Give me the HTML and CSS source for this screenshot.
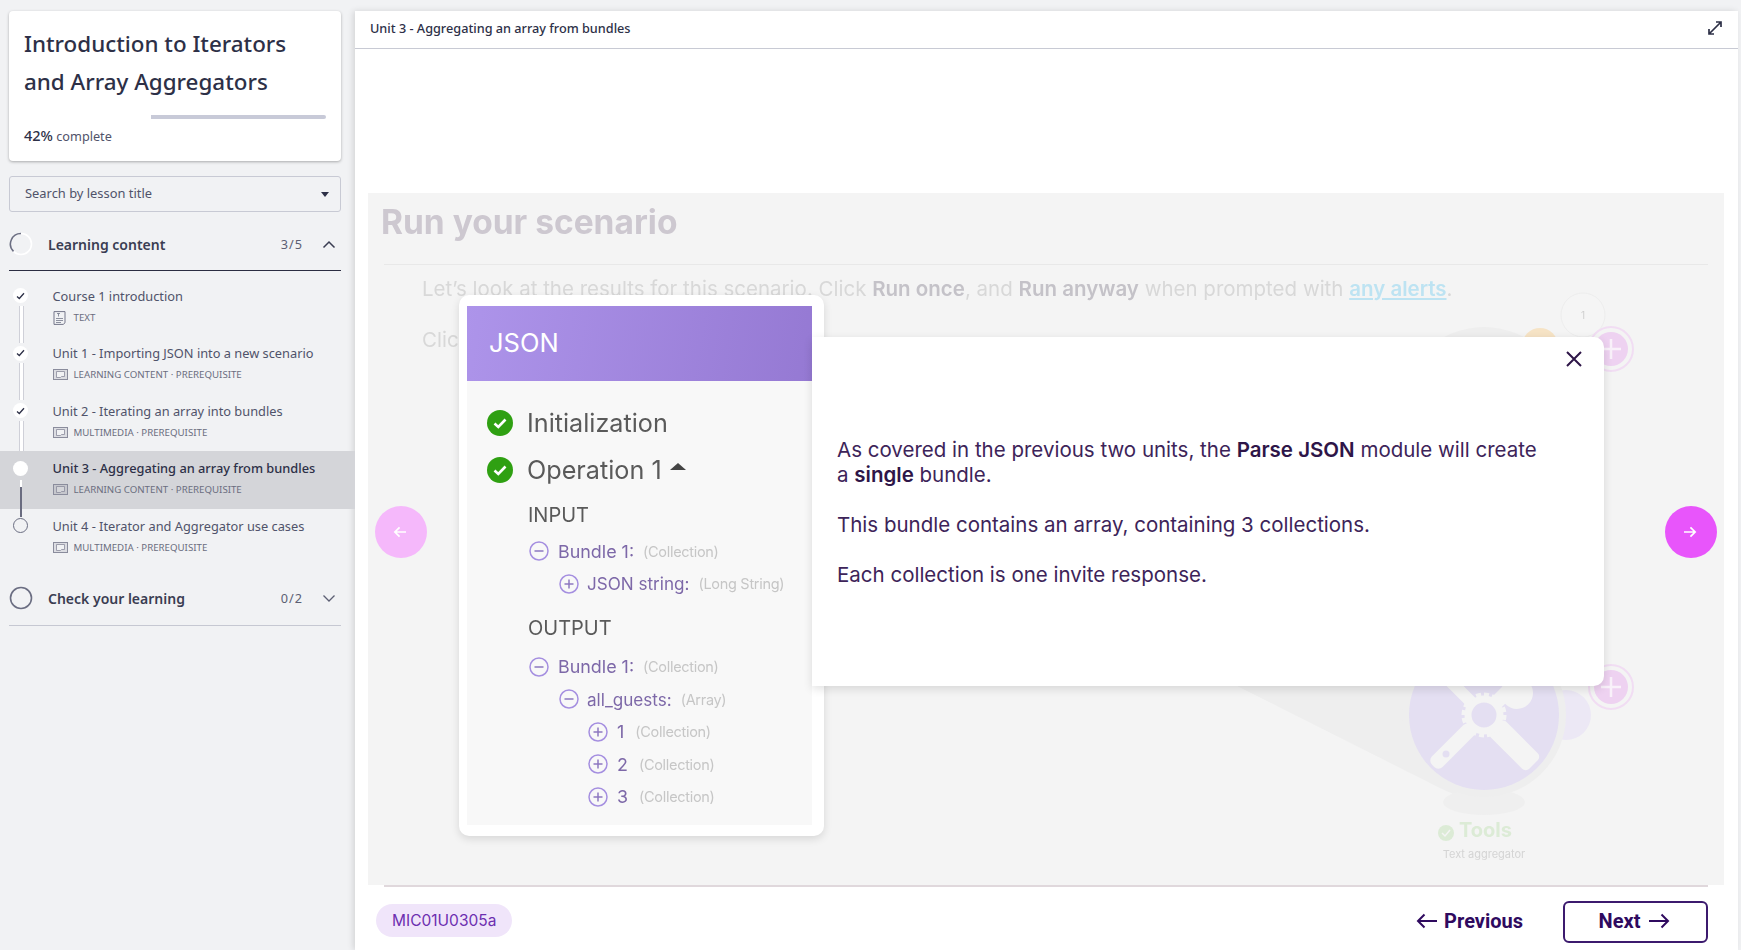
FILE: index.html
```html
<!DOCTYPE html>
<html lang="en">
<head>
    <meta charset="UTF-8">
    <title>Introduction to Iterators and Array Aggregators</title>
    <link rel="stylesheet" href="styles.css">
</head>
<body>
    <aside class="sidebar">
        <div class="course-card">
            <h1>Introduction to Iterators and Array Aggregators</h1>
            <div class="progress"><div class="progress-done"></div><div class="progress-left"></div></div>
            <div class="progress-label"><strong>42%</strong> complete</div>
        </div>

        <div class="search">
            <span>Search by lesson title</span>
            <i class="caret"></i>
        </div>

        <div class="section-head">
            <svg class="ring" width="24" height="24" viewBox="0 0 24 24"><circle cx="12" cy="12" r="10.5" fill="none" stroke="#fff" stroke-width="1.6"/><path d="M12 1.5A10.5 10.5 0 0 0 4.5 19.4" fill="none" stroke="#6b6e82" stroke-width="1.6"/></svg>
            <span class="section-title">Learning content</span>
            <span class="section-count">3/5</span>
            <svg class="chev" width="14" height="9" viewBox="0 0 14 9"><path d="M1.5 7.500L7 2l5.500 5.500" fill="none" stroke="#3a3d52" stroke-width="1.500"/></svg>
        </div>

        <ul class="lessons">
            <li class="lesson done">
                <span class="mark"><svg width="9" height="8" viewBox="0 0 9 8"><path d="M1 4.500L3.300 6.500L8 1.200" fill="none" stroke="#2d3047" stroke-width="1.300"/></svg></span>
                <div class="lesson-title">Course 1 introduction</div>
                <div class="lesson-meta">
                    <svg class="doc" width="13" height="14" viewBox="0 0 13 14"><path d="M1 .6h11v11.200l-1.800 1.600H1z" fill="none" stroke="#74778a"/><path d="M3 7.500h7M3 9.500h7M3 11.500h5M4 2.500h3M5.500 2.500v3" stroke="#74778a" fill="none" stroke-width=".8"/></svg>
                    <span>Text</span>
                </div>
            </li>
            <li class="lesson done">
                <span class="mark"><svg width="9" height="8" viewBox="0 0 9 8"><path d="M1 4.500L3.300 6.500L8 1.200" fill="none" stroke="#2d3047" stroke-width="1.300"/></svg></span>
                <div class="lesson-title">Unit 1 - Importing JSON into a new scenario</div>
                <div class="lesson-meta">
                    <svg class="slides" width="15" height="11" viewBox="0 0 15 11"><rect x=".5" y=".5" width="14" height="10" fill="#dcdde2" stroke="#8a8c9c"/><path d="M3.500 2.500h8v5h-3l-1 1h-4z" fill="#f1f2f4" stroke="#8a8c9c" stroke-width=".8"/></svg>
                    <span>Learning content · Prerequisite</span>
                </div>
            </li>
            <li class="lesson done">
                <span class="mark"><svg width="9" height="8" viewBox="0 0 9 8"><path d="M1 4.500L3.300 6.500L8 1.200" fill="none" stroke="#2d3047" stroke-width="1.300"/></svg></span>
                <div class="lesson-title">Unit 2 - Iterating an array into bundles</div>
                <div class="lesson-meta">
                    <svg class="slides" width="15" height="11" viewBox="0 0 15 11"><rect x=".5" y=".5" width="14" height="10" fill="#dcdde2" stroke="#8a8c9c"/><path d="M3.500 2.500h8v5h-3l-1 1h-4z" fill="#f1f2f4" stroke="#8a8c9c" stroke-width=".8"/></svg>
                    <span>Multimedia · Prerequisite</span>
                </div>
            </li>
            <li class="lesson current">
                <span class="mark"></span>
                <div class="lesson-title">Unit 3 - Aggregating an array from bundles</div>
                <div class="lesson-meta">
                    <svg class="slides" width="15" height="11" viewBox="0 0 15 11"><rect x=".5" y=".5" width="14" height="10" fill="#c6c7cd" stroke="#8a8c9c"/><path d="M3.500 2.500h8v5h-3l-1 1h-4z" fill="#d4d5d9" stroke="#8a8c9c" stroke-width=".8"/></svg>
                    <span>Learning content · Prerequisite</span>
                </div>
            </li>
            <li class="lesson todo">
                <span class="mark"></span>
                <div class="lesson-title">Unit 4 - Iterator and Aggregator use cases</div>
                <div class="lesson-meta">
                    <svg class="slides" width="15" height="11" viewBox="0 0 15 11"><rect x=".5" y=".5" width="14" height="10" fill="#dcdde2" stroke="#8a8c9c"/><path d="M3.500 2.500h8v5h-3l-1 1h-4z" fill="#f1f2f4" stroke="#8a8c9c" stroke-width=".8"/></svg>
                    <span>Multimedia · Prerequisite</span>
                </div>
            </li>
        </ul>

        <div class="section-head second">
            <svg class="ring" width="24" height="24" viewBox="0 0 24 24"><circle cx="12" cy="12" r="10.500" fill="none" stroke="#6b6e82" stroke-width="1.600"/></svg>
            <span class="section-title">Check your learning</span>
            <span class="section-count">0/2</span>
            <svg class="chev" width="14" height="9" viewBox="0 0 14 9"><path d="M1.500 1.500L7 7l5.500-5.500" fill="none" stroke="#5c5f73" stroke-width="1.300"/></svg>
        </div>
    </aside>

    <main class="main">
        <header class="topbar">
            <span>Unit 3 - Aggregating an array from bundles</span>
            <svg width="16" height="16" viewBox="0 0 16 16"><path d="M2 14L14 2M9 2h5v5M2 9v5h5" fill="none" stroke="#2d3047" stroke-width="1.700"/></svg>
        </header>

        <div class="slide-wrap">
            <section class="slide">
                <div class="slide-faded">
                    <h2>Run your scenario</h2>
                    <div class="slide-rule"></div>
                    <p>Let’s look at the results for this scenario. Click <b>Run once</b>, and <b>Run anyway</b> when prompted with <a>any alerts</a>.</p>
                    <p>Click</p>

                    <!-- scenario drawing behind the popups -->
                    <svg class="scenario" width="1356" height="692" viewBox="0 0 1356 692">
                        <path d="M869 493L1076 597L1130 620L1130 480L1000 493z" fill="#eeeeee"/>
                        <ellipse cx="1116" cy="609" rx="41" ry="13" fill="#efefef"/>
                        <circle cx="1198" cy="522" r="25" fill="#ece8f5"/>
                        <circle cx="1116" cy="522" r="82" fill="#eeeeee"/>
                        <circle cx="1116" cy="522" r="75" fill="#e4dff2"/>
                        <g fill="#f4f4f4">
                            <rect x="1108.500" y="538" width="15" height="56" rx="6" transform="rotate(45 1116 522)"/>
                            <rect x="1105" y="538" width="22" height="54" rx="5" transform="rotate(-45 1116 522)"/>
                            <rect x="1110" y="465" width="12" height="42" rx="4" transform="rotate(-45 1116 522)"/>
                            <rect x="1109" y="465" width="14" height="42" rx="4" transform="rotate(45 1116 522)"/>
                            <circle cx="1149" cy="500" r="16"/>
                        </g>
                        <circle cx="1078" cy="561" r="3.500" fill="#e4dff2"/>
                        <circle cx="1116" cy="522" r="16" fill="none" stroke="#f4f4f4" stroke-width="7"/>
                        <circle cx="1116" cy="522" r="20.500" fill="none" stroke="#f4f4f4" stroke-width="4" stroke-dasharray="5 3"/>
                        <circle cx="1116" cy="219" r="85" fill="#eeeeee"/>
                        <circle cx="1172" cy="153" r="18" fill="#f6e3c5"/>
                        <circle cx="1215" cy="122" r="22" fill="#f5f5f5" stroke="#ececec"/>
                        <text x="1215" y="126" class="scenario-num">1</text>
                        <circle cx="1243" cy="156" r="22" fill="none" stroke="#f1ddf3" stroke-width="2"/>
                        <circle cx="1243" cy="156" r="17" fill="#eed2f1"/>
                        <path d="M1233 156h20M1243 146v20" stroke="#f9f1fa" stroke-width="2.500"/>
                        <circle cx="1243" cy="494" r="22" fill="none" stroke="#f1ddf3" stroke-width="2"/>
                        <circle cx="1243" cy="494" r="17" fill="#eed2f1"/>
                        <path d="M1233 494h20M1243 484v20" stroke="#f9f1fa" stroke-width="2.500"/>
                        <circle cx="1078" cy="640" r="8" fill="#dcebd6"/>
                        <path d="M1074 640l3 3 5-6" fill="none" stroke="#f4f4f4" stroke-width="1.500"/>
                        <text x="1091" y="644" class="scenario-name">Tools</text>
                        <text x="1116" y="665" class="scenario-sub">Text aggregator</text>
                    </svg>
                </div>

                <button class="nav-round prev" aria-label="Back">
                    <svg width="14" height="12" viewBox="0 0 16 14"><path d="M15 7H2M7.500 1.500L2 7l5.500 5.500" fill="none" stroke="#fff" stroke-width="2"/></svg>
                </button>
                <button class="nav-round next" aria-label="Forward">
                    <svg width="14" height="12" viewBox="0 0 16 14"><path d="M1 7h13M8.500 1.500L14 7l-5.500 5.500" fill="none" stroke="#fff" stroke-width="2"/></svg>
                </button>

                <div class="json-card">
                    <div class="json-head">JSON</div>
                    <div class="json-body">
                        <div class="op">
                            <svg width="26" height="26" viewBox="0 0 26 26"><circle cx="13" cy="13" r="13" fill="#2fa012"/><path d="M7.500 13.500l3.800 3.500 7.200-7.500" fill="none" stroke="#fff" stroke-width="2.600"/></svg>
                            <span>Initialization</span>
                        </div>
                        <div class="op">
                            <svg width="26" height="26" viewBox="0 0 26 26"><circle cx="13" cy="13" r="13" fill="#2fa012"/><path d="M7.500 13.500l3.800 3.500 7.200-7.500" fill="none" stroke="#fff" stroke-width="2.600"/></svg>
                            <span>Operation 1</span>
                            <i class="op-caret"></i>
                        </div>

                        <div class="tree-label">INPUT</div>
                        <div class="tree-row">
                            <svg width="20" height="20" viewBox="0 0 20 20"><circle cx="10" cy="10" r="9" fill="none" stroke="#a58fe0" stroke-width="1.500"/><path d="M5.500 10h9" stroke="#8d78c0" stroke-width="1.500"/></svg>
                            <span class="key">Bundle 1:</span><span class="type">(Collection)</span>
                        </div>
                        <div class="tree-row lvl2">
                            <svg width="20" height="20" viewBox="0 0 20 20"><circle cx="10" cy="10" r="9" fill="none" stroke="#a58fe0" stroke-width="1.500"/><path d="M5.500 10h9M10 5.500v9" stroke="#8d78c0" stroke-width="1.500"/></svg>
                            <span class="key">JSON string:</span><span class="type">(Long String)</span>
                        </div>

                        <div class="tree-label output">OUTPUT</div>
                        <div class="tree-row">
                            <svg width="20" height="20" viewBox="0 0 20 20"><circle cx="10" cy="10" r="9" fill="none" stroke="#a58fe0" stroke-width="1.500"/><path d="M5.500 10h9" stroke="#8d78c0" stroke-width="1.500"/></svg>
                            <span class="key">Bundle 1:</span><span class="type">(Collection)</span>
                        </div>
                        <div class="tree-row lvl2">
                            <svg width="20" height="20" viewBox="0 0 20 20"><circle cx="10" cy="10" r="9" fill="none" stroke="#a58fe0" stroke-width="1.500"/><path d="M5.500 10h9" stroke="#8d78c0" stroke-width="1.500"/></svg>
                            <span class="key">all_guests:</span><span class="type">(Array)</span>
                        </div>
                        <div class="tree-row lvl3">
                            <svg width="20" height="20" viewBox="0 0 20 20"><circle cx="10" cy="10" r="9" fill="none" stroke="#a58fe0" stroke-width="1.500"/><path d="M5.500 10h9M10 5.500v9" stroke="#8d78c0" stroke-width="1.500"/></svg>
                            <span class="key">1</span><span class="type">(Collection)</span>
                        </div>
                        <div class="tree-row lvl3">
                            <svg width="20" height="20" viewBox="0 0 20 20"><circle cx="10" cy="10" r="9" fill="none" stroke="#a58fe0" stroke-width="1.500"/><path d="M5.500 10h9M10 5.500v9" stroke="#8d78c0" stroke-width="1.500"/></svg>
                            <span class="key">2</span><span class="type">(Collection)</span>
                        </div>
                        <div class="tree-row lvl3">
                            <svg width="20" height="20" viewBox="0 0 20 20"><circle cx="10" cy="10" r="9" fill="none" stroke="#a58fe0" stroke-width="1.500"/><path d="M5.500 10h9M10 5.500v9" stroke="#8d78c0" stroke-width="1.500"/></svg>
                            <span class="key">3</span><span class="type">(Collection)</span>
                        </div>
                    </div>
                </div>

                <div class="note">
                    <svg class="note-close" width="16" height="16" viewBox="0 0 16 16"><path d="M1 1l14 14M15 1L1 15" fill="none" stroke="#2e1548" stroke-width="2"/></svg>
                    <p>As covered in the previous two units, the <b>Parse JSON</b> module will create a <b>single</b> bundle.</p>
                    <p>This bundle contains an array, containing 3 collections.</p>
                    <p>Each collection is one invite response.</p>
                </div>
            </section>
        </div>

        <footer class="footer">
            <span class="code-pill">MIC01U0305a</span>
            <div class="pager">
                <a class="pager-prev">
                    <svg width="22" height="16" viewBox="0 0 22 16"><path d="M21 8H2M8.500 1.500L2 8l6.500 6.500" fill="none" stroke="#2f0a5f" stroke-width="2"/></svg>
                    Previous
                </a>
                <a class="pager-next">
                    Next
                    <svg width="22" height="16" viewBox="0 0 22 16"><path d="M1 8h19M13.500 1.500L20 8l-6.500 6.500" fill="none" stroke="#2f0a5f" stroke-width="2"/></svg>
                </a>
            </div>
        </footer>
    </main>
</body>
</html>
```

FILE: styles.css
```css
* {
    box-sizing: border-box;
}
html, body {
    height: 100%;
}
body {
    margin: 0;
    display: flex;
    height: 950px;
    overflow: hidden;
    background: #f1f2f4;
    font-family: "Noto Sans", sans-serif;
    color: #2d3047;
}

/* sidebar */
.sidebar {
    width: 355px;
    flex: none;
    padding: 11px 14px 0 9px;
}
.course-card {
    height: 150px;
    padding: 14px 15px 0;
    background: white;
    border-radius: 4px;
    box-shadow: 0 1px 3px rgba(0,0,0,0.3);
}
.course-card h1 {
    margin: 0;
    font-size: 22.4px;
    line-height: 38px;
    font-weight: 500;
    color: #2d3047;
}
.progress {
    display: flex;
    height: 4px;
    margin-top: 14px;
}
.progress-done {
    width: 42%;
    background: white;
}
.progress-left {
    flex: 1;
    background: #c8cad8;
    border-radius: 0 2px 2px 0;
}
.progress-label {
    margin-top: 6px;
    font-size: 12.7px;
    color: #50536a;
}
.progress-label strong {
    font-weight: 500;
    font-size: 14.5px;
    color: #2d3047;
}
.search {
    display: flex;
    align-items: center;
    justify-content: space-between;
    height: 36px;
    margin-top: 15px;
    padding: 0 11px 2px 15px;
    border: 1px solid #c8cad4;
    border-radius: 3px;
    font-size: 12.9px;
    color: #50536a;
}
.caret {
    margin-top: 2px;
    border: 4px solid transparent;
    border-top: 5px solid #2d3047;
    border-bottom: 0;
}
.section-head {
    display: flex;
    align-items: center;
    height: 59px;
    padding-top: 6px;
    border-bottom: 1px solid #2b2d42;
}
.section-head.second {
    height: 59.5px;
    border-bottom-color: #c6c8d2;
}
.ring {
    flex: none;
}
.section-title {
    flex: 1;
    margin-left: 15px;
    font-size: 14px;
    font-weight: 600;
    color: #3a3d52;
}
.section-count {
    font-size: 12.7px;
    letter-spacing: 1px;
    color: #5c5f73;
}
.chev {
    margin: 0 5px 0 19px;
}
.lessons {
    list-style: none;
    margin: 7.5px -14px 0 -9px;
    padding: 0;
}
.lesson {
    position: relative;
    height: 57.5px;
    padding: 8px 0 0 52.5px;
}
.lesson-title {
    font-size: 12.8px;
    line-height: 18px;
    color: #50536a;
}
.lesson-meta {
    display: flex;
    align-items: center;
    gap: 6px;
    margin-top: 6px;
    font-size: 9.7px;
    line-height: 13px;
    text-transform: uppercase;
    color: #6b6e80;
}
.lesson-meta .doc {
    margin-right: 2px;
}
.current {
    background: #d4d5d9;
}
.current .lesson-title {
    color: #2d3047;
    font-weight: 500;
}
.mark {
    position: absolute;
    left: 13px;
    top: 9.5px;
    width: 15px;
    height: 15px;
    display: flex;
    align-items: center;
    justify-content: center;
    border-radius: 50%;
    background: white;
    z-index: 1;
}
.todo .mark {
    background: transparent;
    border: 1px solid #6b6e82;
}
/* line to the next lesson */
.lesson::after {
    content: "";
    position: absolute;
    left: 19px;
    top: 27px;
    width: 3px;
    height: 37px;
    background: white;
    border: solid #cfd0d8;
    border-width: 0 1px;
}
.current::after {
    left: 19.5px;
    top: 28.5px;
    width: 2px;
    border: 0;
    background: linear-gradient(#fff 7px, #6a6c80 7px);
}
.todo::after {
    display: none;
}

/* main panel */
.main {
    flex: 1;
    display: flex;
    flex-direction: column;
    margin: 11px 3px 0 0;
    background: white;
    box-shadow: -2px 0 6px rgba(0,0,0,0.12);
}
.topbar {
    flex: none;
    display: flex;
    align-items: center;
    justify-content: space-between;
    height: 38px;
    padding: 0 15px 3px 15px;
    border-bottom: 1px solid #c8cad4;
    font-size: 12.7px;
    font-weight: 500;
    color: #2d3047;
}
.slide-wrap {
    padding: 144px 14px 0 13px;
}
.slide {
    position: relative;
    height: 692px;
    background: #f4f4f4;
    font-family: "Inter", sans-serif;
}
.slide-faded {
    padding: 7px 16px 0;
    height: 100%;
    filter: blur(0.4px);
}
.slide-faded h2 {
    margin: 0 0 0 -3px;
    font-size: 33.5px;
    line-height: 44px;
    font-weight: 700;
    color: #cdc8d0;
}
.slide-rule {
    height: 1px;
    margin-top: 20px;
    background: #e8e8e8;
}
.slide-faded p {
    margin: 11px 0 26px 38px;
    font-size: 20.5px;
    line-height: 25px;
    color: #d8d8d8;
}
.slide-faded b {
    font-weight: 600;
    color: #c4c2c8;
}
.slide-faded a {
    color: #bde3f2;
    font-weight: 600;
    text-decoration: underline;
}
.scenario {
    position: absolute;
    left: 0;
    top: 0;
}
.scenario-num {
    font-size: 10px;
    text-anchor: middle;
    fill: #cfcfcf;
}
.scenario-name {
    font-size: 20px;
    font-weight: 700;
    fill: #dcebd6;
}
.scenario-sub {
    font-size: 11px;
    text-anchor: middle;
    fill: #d4d4d4;
}
.nav-round {
    position: absolute;
    top: 313px;
    width: 52px;
    height: 52px;
    display: flex;
    align-items: center;
    justify-content: center;
    padding: 0 3px 0 0;
    border: 0;
    border-radius: 50%;
}
.nav-round.prev {
    left: 7px;
    background: #f5b8fb;
}
.nav-round.next {
    left: 1297px;
    background: #e855fb;
}

/* popups over the slide */
.json-card {
    position: absolute;
    left: 91px;
    top: 102px;
    width: 365px;
    height: 541px;
    padding: 11px 12px 11px 8px;
    background: white;
    border-radius: 10px;
    box-shadow: 0 3px 8px rgba(0,0,0,0.12);
}
.json-head {
    height: 75px;
    padding: 0 22px 3px;
    display: flex;
    align-items: center;
    background: linear-gradient(100deg, #ad94ea, #9579d3);
    font-size: 25.5px;
    color: white;
}
.json-body {
    height: 444px;
    padding: 18px 0 0 20px;
    background: #f8f8f8;
    filter: blur(0.3px);
}
.op {
    display: flex;
    align-items: center;
    gap: 14px;
    height: 47px;
    font-size: 25.2px;
    color: #5a5a5a;
}
.op-caret {
    margin-left: -6px;
    margin-bottom: 6px;
    border: 8px solid transparent;
    border-bottom: 7px solid #444;
    border-top: 0;
}
.tree-label {
    margin: 7px 0 4px 41px;
    height: 31px;
    font-size: 20px;
    line-height: 31px;
    color: #5a5a5a;
}
.tree-label.output {
    margin-top: 12.5px;
    margin-bottom: 7px;
}
.tree-row {
    display: flex;
    align-items: center;
    height: 32.5px;
    margin-left: 42px;
    font-size: 17.9px;
    color: #7d68a8;
}
.tree-row svg {
    flex: none;
    margin-right: 9px;
}
.tree-row.lvl2 {
    margin-left: 72px;
    font-size: 17.1px;
}
.tree-row.lvl2 svg {
    margin-right: 8px;
}
.tree-row.lvl3 {
    margin-left: 101px;
}
.key {
    margin-right: 9px;
}
.lvl3 .key {
    margin-right: 11px;
}
.type {
    font-size: 14.5px;
    color: #c6c6c6;
    letter-spacing: -0.3px;
}
.note {
    position: absolute;
    left: 444px;
    top: 144px;
    width: 792px;
    height: 349px;
    padding: 100px 65px 0 25px;
    background: white;
    border-radius: 0 10px 10px 0;
    box-shadow: 0 3px 10px rgba(0,0,0,0.12);
    font-size: 20.5px;
    line-height: 25px;
    color: #3d2459;
}
.note p {
    margin: 0 0 25px;
}
.note b {
    font-weight: 600;
    color: #2e1548;
}
.note-close {
    position: absolute;
    right: 22px;
    top: 14px;
}

/* footer */
.footer {
    flex: 1;
    display: flex;
    align-items: flex-start;
    justify-content: space-between;
    margin: 0 30px 0 29px;
    padding-top: 14px;
    border-top: 2px solid #e0d8dc;
    font-family: "Inter", sans-serif;
}
.code-pill {
    margin: 3px 0 0 -8px;
    padding: 8px 16px;
    background: #f0e5fa;
    border-radius: 17px;
    font-size: 15.5px;
    line-height: 17px;
    color: #6d2fb0;
}
.pager {
    display: flex;
    align-items: center;
    font-family: "Roboto", sans-serif;
    font-size: 20px;
    font-weight: 700;
    color: #2f0a5f;
}
.pager a {
    display: flex;
    align-items: center;
    gap: 6px;
}
.pager-prev {
    margin-right: 40px;
    padding-bottom: 2px;
}
.pager a.pager-next {
    justify-content: center;
    gap: 8px;
    width: 145px;
    height: 42px;
    padding: 0 2px 2px 0;
    border: 2px solid #3c1a6e;
    border-radius: 6px;
}
```
